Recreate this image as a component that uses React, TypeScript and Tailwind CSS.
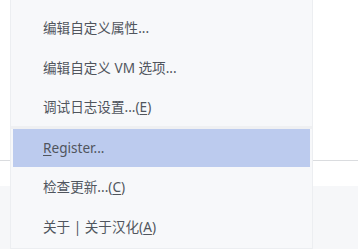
import React from "react";

const font = { fontFamily: '"Noto Sans", "Noto Sans CJK SC", sans-serif' };

function Item({ children, active = false, h = "h-[40px]" }: { children: React.ReactNode; active?: boolean; h?: string }) {
  return (
    <div
      className={`${h} flex items-center pl-[30px] pt-[1px] text-[13.6px] text-[#50555d] ${active ? "bg-[#bccbee]" : ""}`}
    >
      {children}
    </div>
  );
}

export default function App() {
  return (
    <div className="relative w-[358px] h-[249px] bg-white overflow-hidden" style={font}>
      <div className="flex flex-col h-full">
        <div className="h-[160px]" />
        <div className="h-[1px] bg-[#dadcdf]" />
        <div className="h-[25px] bg-white" />
        <div className="flex-1 bg-[#f6f7f9]" />
      </div>
      <div className="absolute left-[10px] top-0 w-[303px] h-[249px] bg-[#f7f8fa] border-x border-b border-[#eceef1] px-[2px] pt-[8px]">
        <Item>编辑自定义属性...</Item>
        <Item>编辑自定义 VM 选项...</Item>
        <Item h="h-[38px]">
          调试日志设置...(<span className="underline underline-offset-2">E</span>)
        </Item>
        <div className="h-[3px] bg-[#eff0f2] -mx-[2px]" />
        <Item active h="h-[38px]">
          <span className="underline underline-offset-2">R</span>egister...
        </Item>
        <Item>
          检查更新...(<span className="underline underline-offset-2">C</span>)
        </Item>
        <Item>
          关于 | 关于汉化(<span className="underline underline-offset-2">A</span>)
        </Item>
      </div>
    </div>
  );
}
